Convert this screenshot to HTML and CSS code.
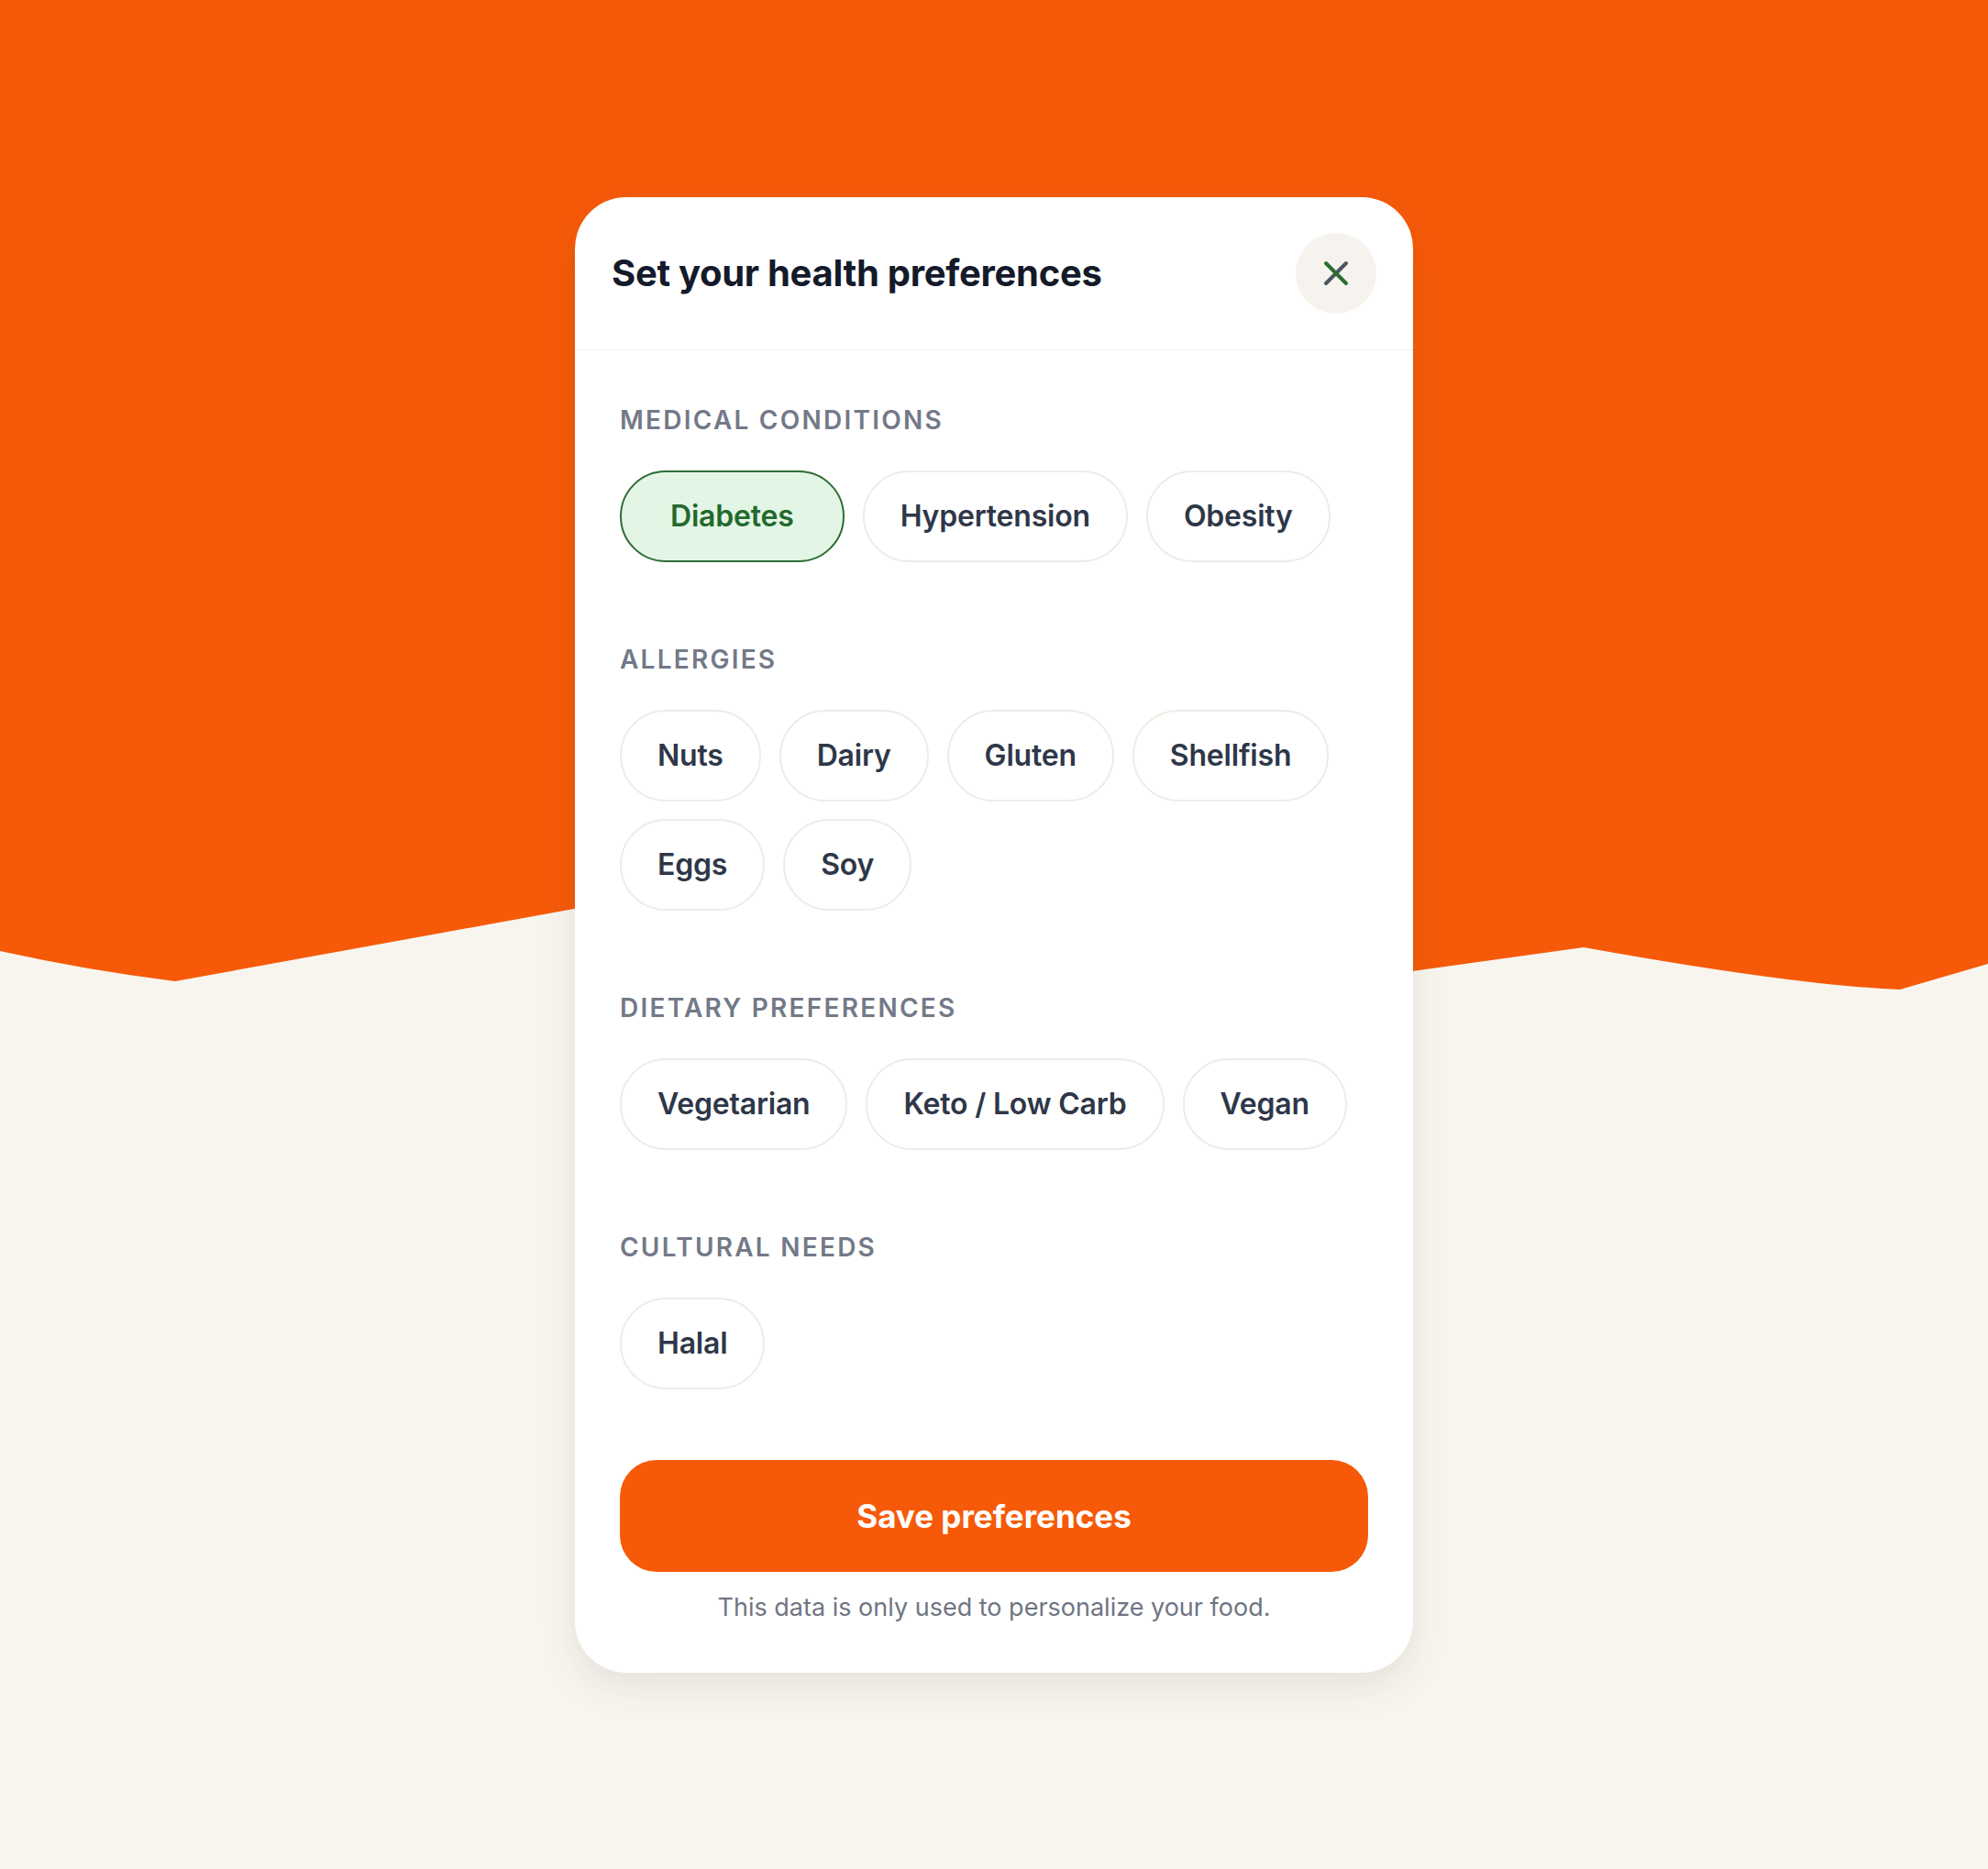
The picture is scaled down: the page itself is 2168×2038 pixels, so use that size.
FILE: index.html
```html
<!DOCTYPE html>
<html lang="en">
<head>
<meta charset="utf-8">
<title>Health preferences</title>
<link rel="stylesheet" href="styles.css">
</head>
<body>
<svg class="backdrop" viewBox="0 0 2168 1100" preserveAspectRatio="none" aria-hidden="true">
  <path d="M0 0 H2168 V1051 L2072 1079 Q1955 1074 1727 1033 L1540 1059 L1100 880 L626 991 L191 1070 Q95 1058 0 1037 Z" fill="#f65a09"/>
</svg>
<main class="stage">
  <section class="card">
    <header class="card-head">
      <h1 class="title">Set your health preferences</h1>
      <button class="close" type="button" aria-label="Close">
        <svg viewBox="0 0 28 28" width="28" height="28" aria-hidden="true">
          <line x1="25" y1="3" x2="3" y2="25" stroke="#4b5563" stroke-width="4" stroke-linecap="round"/>
          <line x1="3" y1="3" x2="25" y2="25" stroke="#2a6e31" stroke-width="4" stroke-linecap="round"/>
        </svg>
      </button>
    </header>
    <div class="card-body">
      <div class="group">
        <h2 class="label">Medical conditions</h2>
        <div class="chips">
          <button class="chip selected" type="button">Diabetes</button>
          <button class="chip" type="button">Hypertension</button>
          <button class="chip" type="button">Obesity</button>
        </div>
      </div>
      <div class="group">
        <h2 class="label">Allergies</h2>
        <div class="chips">
          <button class="chip" type="button">Nuts</button>
          <button class="chip" type="button">Dairy</button>
          <button class="chip" type="button">Gluten</button>
          <button class="chip" type="button">Shellfish</button>
          <button class="chip" type="button">Eggs</button>
          <button class="chip" type="button">Soy</button>
        </div>
      </div>
      <div class="group">
        <h2 class="label">Dietary preferences</h2>
        <div class="chips">
          <button class="chip" type="button">Vegetarian</button>
          <button class="chip" type="button">Keto / Low Carb</button>
          <button class="chip" type="button">Vegan</button>
        </div>
      </div>
      <div class="group">
        <h2 class="label">Cultural needs</h2>
        <div class="chips">
          <button class="chip" type="button">Halal</button>
        </div>
      </div>
      <button class="save" type="button">Save preferences</button>
      <p class="note">This data is only used to personalize your food.</p>
    </div>
  </section>
</main>
</body>
</html>
```
FILE: styles.css
```css
* { box-sizing: border-box; }

html, body {
  margin: 0;
  padding: 0;
}

body {
  position: relative;
  background: #f8f5ef;
  font-family: Inter, "Noto Sans", sans-serif;
  color: #2d3748;
  min-height: 100vh;
}

.backdrop {
  position: absolute;
  left: 0;
  top: 0;
  width: 100%;
  height: 1100px;
  display: block;
  z-index: 0;
}

.stage {
  position: relative;
  z-index: 1;
  min-height: 100vh;
  display: flex;
  align-items: center;
  justify-content: center;
}

.card {
  width: 914px;
  background: #ffffff;
  border-radius: 56px;
  box-shadow: 0 14px 40px rgba(70, 50, 30, 0.10);
  overflow: hidden;
}

.card-head {
  display: flex;
  align-items: center;
  justify-content: space-between;
  padding: 39px 40px;
  border-bottom: 1px solid #f3f0eb;
}

.title {
  margin: 0;
  font-size: 40px;
  line-height: 48px;
  font-weight: 700;
  color: #141a2a;
  letter-spacing: -0.3px;
}

.close {
  width: 88px;
  height: 88px;
  border-radius: 50%;
  border: 0;
  padding: 0;
  background: #f6f3ee;
  display: flex;
  align-items: center;
  justify-content: center;
  cursor: pointer;
}

.card-body {
  padding: 62px 49px 58px;
  display: flex;
  flex-direction: column;
}

.group + .group {
  margin-top: 92px;
}

.label {
  margin: 0 0 41px;
  font-size: 28px;
  line-height: 28px;
  font-weight: 600;
  letter-spacing: 0.08em;
  text-transform: uppercase;
  color: #737987;
}

.chips {
  display: flex;
  flex-wrap: wrap;
  column-gap: 20px;
  row-gap: 19px;
}

.chip {
  font-family: inherit;
  font-size: 32px;
  line-height: 32px;
  font-weight: 600;
  letter-spacing: -0.2px;
  color: #2e3748;
  background: #ffffff;
  border: 2px solid #efece6;
  border-radius: 999px;
  padding: 32px 39px;
  cursor: pointer;
}

.chip.selected {
  background: #e3f6e5;
  border-color: #2f6d35;
  color: #23692d;
  padding-left: 53px;
  padding-right: 53px;
}

.save {
  margin-top: 77px;
  height: 122px;
  width: 100%;
  border: 0;
  border-radius: 40px;
  background: #f65a09;
  color: #ffffff;
  font-family: inherit;
  font-size: 35px;
  font-weight: 700;
  cursor: pointer;
}

.note {
  margin: 25px 0 0;
  font-size: 27px;
  line-height: 27px;
  text-align: center;
  color: #6f7583;
}
```
